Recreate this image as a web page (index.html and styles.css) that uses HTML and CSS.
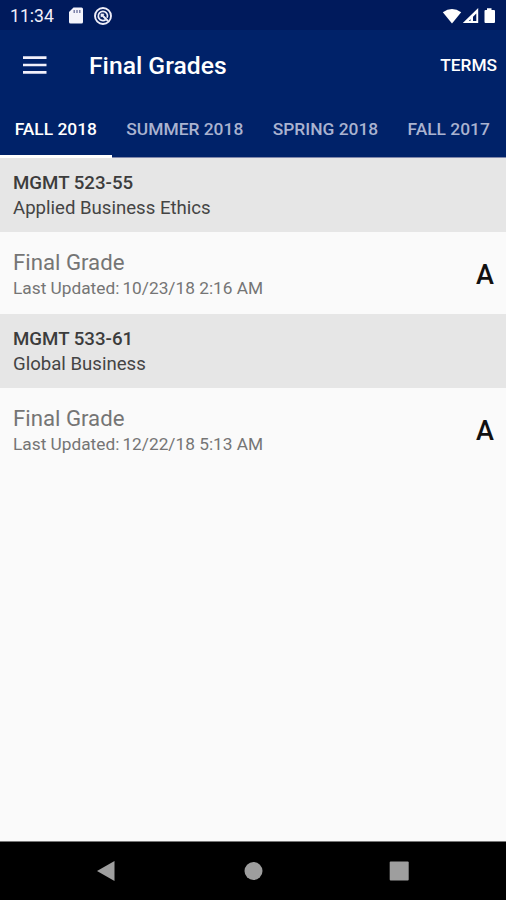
FILE: index.html
```html
<!DOCTYPE html>
<html lang="en">
<head>
<meta charset="utf-8">
<title>Final Grades</title>
<link rel="stylesheet" href="styles.css">
</head>
<body>
<div class="screen">
  <div class="status">
    <span class="clock">11:34</span>
    <svg class="sd" width="14" height="17" viewBox="0 0 14 17"><path d="M4.5 0.5H12.5Q14 0.5 14 2V15Q14 16.5 12.5 16.5H1.5Q0 16.5 0 15V5Z" fill="#f4f3fb"/><path d="M5.2 3v3M8 3v3M10.8 3v3" stroke="#6a6f9c" stroke-width="1.3"/></svg>
    <svg class="sync" width="20" height="20" viewBox="0 0 20 20" fill="none" stroke="#eeedf8"><circle cx="10" cy="10" r="8" stroke-width="1.9"/><path d="M12.600 13.700A4.600 4.600 0 1 1 14.300 8.500Q14.800 10 14.100 11.700" stroke-width="1.7"/><path d="M8.200 8.200L15 15" stroke-width="2"/><path d="M8 11.200V8h3.200Z" fill="#eeedf8" stroke-width=".6"/></svg>
    <span class="grow"></span>
    <svg width="64" height="20" viewBox="0 0 64 20" fill="#fff"><path d="M.8 6.2Q10 -.2 19.2 6.2L10 17.5Z"/><path d="M36.200 2V17H20.800ZM34.300 7.500L26.800 15.100H34.300Z" fill-rule="evenodd"/><path d="M31 9.500V15.500H28.500V12Z"/><path d="M45 2.2h4.5v1.7H52q1 0 1 1V16q0 1-1 1h-8.500q-1 0-1-1V4.900q0-1 1-1H45Z"/></svg>
  </div>
  <header class="bar">
    <svg class="menu" width="24" height="18" viewBox="0 0 24 18"><path d="M0 1.600h23.500M0 9h23.500M0 16.400h23.500" stroke="#f1f0fa" stroke-width="2.700"/></svg>
    <h1>Final Grades</h1>
    <span class="terms">TERMS</span>
  </header>
  <nav class="tabs">
    <span class="tab active">FALL 2018</span>
    <span class="tab">SUMMER 2018</span>
    <span class="tab">SPRING 2018</span>
    <span class="tab">FALL 2017</span>
  </nav>
  <main>
    <section class="course">
      <div class="head"><h2>MGMT 523-55</h2><p>Applied Business Ethics</p></div>
      <div class="row"><div><div class="label">Final Grade</div><div class="date"><span>Last Updated:</span><span>10/23/18 2:16 AM</span></div></div><b class="grade">A</b></div>
    </section>
    <section class="course">
      <div class="head"><h2>MGMT 533-61</h2><p>Global Business</p></div>
      <div class="row"><div><div class="label">Final Grade</div><div class="date"><span>Last Updated:</span><span>12/22/18 5:13 AM</span></div></div><b class="grade">A</b></div>
    </section>
  </main>
  <footer class="nav">
    <svg width="20" height="22" viewBox="0 0 20 22"><path d="M1 11L18.500 1V21Z" fill="#9e9e9e"/></svg>
    <svg width="20" height="20" viewBox="0 0 20 20"><circle cx="10.500" cy="10" r="9" fill="#9e9e9e"/></svg>
    <svg width="20" height="20" viewBox="0 0 20 20"><rect x=".7" y=".5" width="19" height="19" rx="1" fill="#9e9e9e"/></svg>
  </footer>
</div>
</body>
</html>
```
FILE: styles.css
```css
* { box-sizing: border-box; }
body { margin: 0; font-family: Roboto, sans-serif; }
h1, h2, p { margin: 0; }
svg { display: block; flex: none; }
.screen { width: 506px; height: 900px; display: flex; flex-direction: column; overflow: hidden; background: #fafafa; white-space: nowrap; }
.status { height: 30px; flex: none; display: flex; align-items: center; padding: 1px 0 0 10px; background: #001a5c; color: #f1f0fa; }
.clock { width: 59px; font-size: 17.6px; line-height: 20px; }
.sync { margin-left: 10px; }
.grow { flex: 1; }
.bar { height: 71px; flex: none; display: flex; align-items: center; padding: 0 9px 0 23px; background: #002269; color: #fff; }
.menu { margin-top: -2px; }
h1 { margin-left: 42px; flex: 1; font-size: 24.7px; font-weight: 500; line-height: 30px; }
.terms { margin-top: -2px; font-size: 17.3px; font-weight: 500; }
.tabs { height: 57px; flex: none; display: flex; background: #002269; color: #aab3d0; border-bottom: 1px solid #8188ab; }
.tab { padding: 0 14.700px; font-size: 17.4px; font-weight: 500; line-height: 57px; height: 57px; }
.active { color: #fff; border-bottom: 3px solid #fff; }
main { flex: 1; }
.head { height: 74px; padding: 13px 13px 0; background: #e6e6e6; color: #444; }
.course { padding-top: 0; }
h2 { font-size: 18.700px; font-weight: 500; line-height: 25px; color: #3c3c3c; }
.head p { font-size: 18.600px; line-height: 25px; }
.row { height: 82px; display: flex; justify-content: space-between; padding: 16px 12px 0 13px; color: #757575; }
.label { font-size: 22.200px; line-height: 28px; }
.date { display: flex; gap: 3px; font-size: 17.3px; line-height: 24px; }
.grade { font-size: 27px; font-weight: 500; line-height: 54px; color: #111; }
.nav { height: 59px; flex: none; display: flex; align-items: center; justify-content: space-between; padding: 0 97px 1px 96px; background: #000; border-top: 1px solid #777; }
```
